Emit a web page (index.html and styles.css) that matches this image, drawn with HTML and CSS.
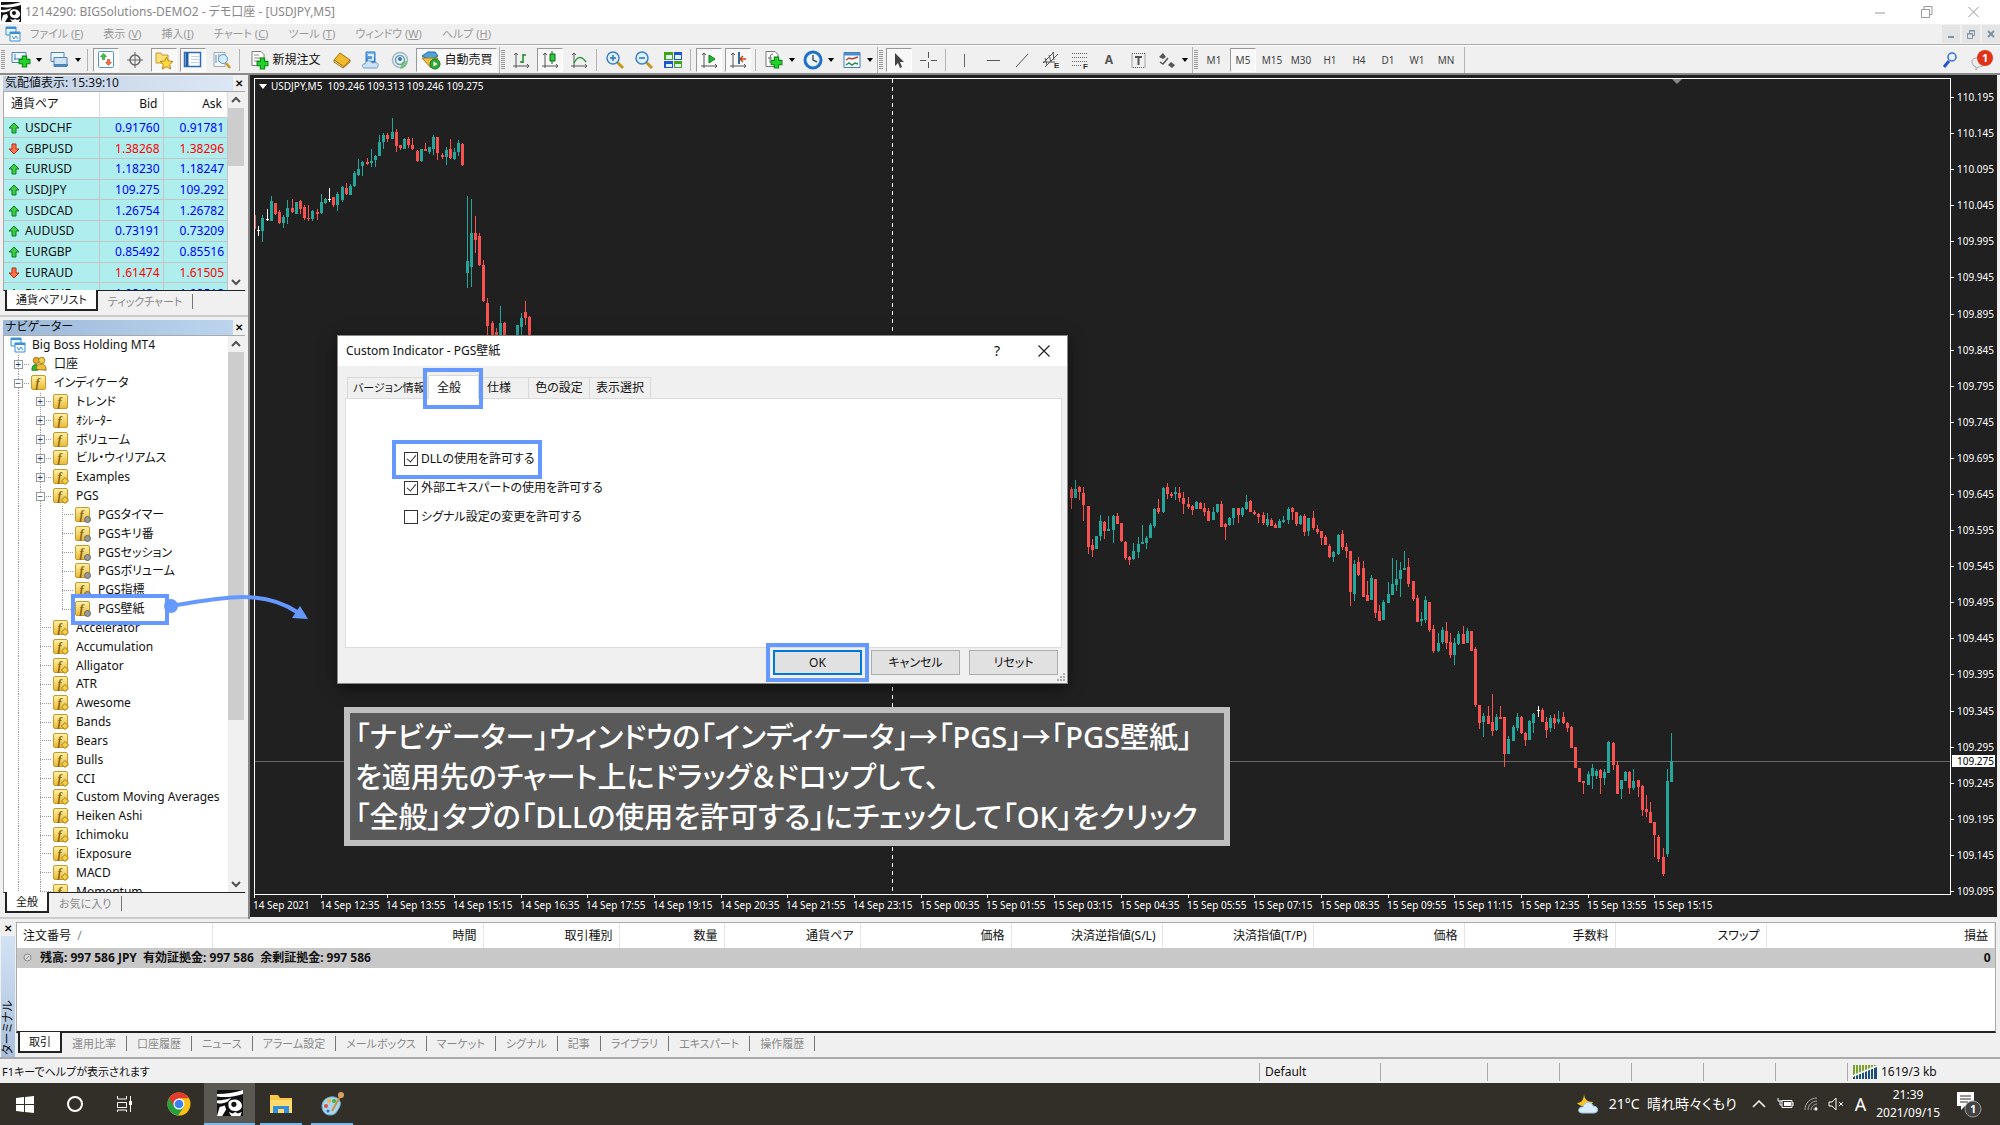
FILE: index.html
```
<!DOCTYPE html>
<html lang="ja">
<head>
  <meta charset="UTF-8">
  <meta name="viewport" content="width=device-width, initial-scale=1.0">
  <title>1214290: BIGSolutions-DEMO2 - デモ口座 - [USDJPY,M5]</title>
  <link rel="stylesheet" href="styles.css">
</head>
<body>
  <!-- shared icons -->
  <svg class="defs" width="0" height="0" aria-hidden="true">
    <defs>
      <linearGradient id="gold" x1="0" y1="0" x2="0" y2="1"><stop offset="0" stop-color="#fff3a8"/><stop offset="1" stop-color="#e8b935"/></linearGradient>
      <linearGradient id="blue" x1="0" y1="0" x2="0" y2="1"><stop offset="0" stop-color="#8cc4f5"/><stop offset="1" stop-color="#1f6fc4"/></linearGradient>
    </defs>
    <symbol id="i-windows" viewBox="0 0 16 16"><path d="M1 1h10v8H1z" fill="#e8f4fd" stroke="#3c8fd0"/><path d="M1 2h10" stroke="#3c8fd0" stroke-width="2"/><path d="M5 6h10v9H5z" fill="#f4faff" stroke="#3c8fd0"/><path d="M5 7h10" stroke="#3c8fd0" stroke-width="2"/><path d="M7 10l2 3 2-3 2 3" fill="none" stroke="#3c8fd0"/></symbol>
    <symbol id="i-func" viewBox="0 0 16 16"><rect x=".5" y=".5" width="14" height="14" rx="1.5" fill="url(#gold)" stroke="#c9982a"/><text x="4.500" y="11.500" font-family="Liberation Serif" font-style="italic" font-weight="bold" font-size="12" fill="#8a6410">f</text></symbol>
    <symbol id="i-func-y" viewBox="0 0 16 16"><use href="#i-func"/><path d="M12 8.500l3.500 3.500-3.500 3.500L8.500 12z" fill="#f2d04a" stroke="#a87e18"/></symbol>
    <symbol id="i-func-g" viewBox="0 0 16 16"><use href="#i-func"/><circle cx="12.500" cy="12.500" r="3" fill="#999" stroke="#666"/></symbol>
    <symbol id="i-people" viewBox="0 0 18 16"><circle cx="6" cy="4" r="3.500" fill="#e8a92c" stroke="#9a6d10"/><circle cx="12" cy="4" r="3.500" fill="#f4cf4d" stroke="#9a6d10"/><path d="M1 15c0-6 3-7 6-6l1 6z" fill="#35b52e" stroke="#1d7a1a"/><path d="M6 14c0-6 3-6 6-6s5 2 5 7z" fill="#eabf3b" stroke="#9a6d10"/></symbol>
    <symbol id="i-up" viewBox="0 0 12 12"><path d="M6 1l5 5H8v5H4V6H1z" fill="#3ecb4a" stroke="#0b7d1c"/></symbol>
    <symbol id="i-down" viewBox="0 0 12 12"><path d="M6 11L1 6h3V1h4v5h3z" fill="#ff7146" stroke="#b02c10"/></symbol>
    <symbol id="i-plus" viewBox="0 0 12 12"><path d="M4 1h4v3h3v4H8v3H4V8H1V4h3z" fill="#24d22c" stroke="#0a8a14"/></symbol>
    <symbol id="i-axes" viewBox="0 0 20 20"><path d="M5 3v15M2 16h16M3 5l2-2 2 2M16 14l2 2-2 2" fill="none" stroke="#555"/></symbol>
    <symbol id="i-logo" viewBox="0 0 20 20"><path d="M0 0h20v20H0z" fill="#111"/><path d="M0 3c7 0 14-1 20-3v3C14 5 7 6 0 5z" fill="#fff"/><path d="M0 8c5 0 8-1 11-2L8 9c-3 1-5 2-8 1z" fill="#fff"/><path d="M9 9c3-3 9-2 10 2s-3 6-6 5c-3 0-5-3-4-7z" fill="#fff"/><circle cx="13" cy="11" r="2" fill="#111"/><path d="M2 13l4-1 1 3-3 5H0zM9 17l2 3h7l1-3-3 1-2-1-2 1z" fill="#fff"/></symbol>
    <symbol id="i-scroll-up" viewBox="0 0 16 16"><path d="M4 10l4-4 4 4" fill="none" stroke="#505050" stroke-width="2"/></symbol>
    <symbol id="i-scroll-down" viewBox="0 0 16 16"><path d="M4 6l4 4 4-4" fill="none" stroke="#505050" stroke-width="2"/></symbol>
  </svg>

  <header class="titlebar">
    <svg class="logo" width="20" height="20"><use href="#i-logo"/></svg>
    <h1>1214290: BIGSolutions-DEMO2 - デモ口座 - [USDJPY,M5]</h1>
    <div class="win-buttons">
      <button aria-label="最小化"><svg width="14" height="14"><path d="M2 8h10" stroke="#999"/></svg></button>
      <button aria-label="元に戻す"><svg width="14" height="14"><path d="M1.500 4.500h8v8h-8zM4 4V1.500h8v8H10" fill="none" stroke="#999"/></svg></button>
      <button aria-label="閉じる"><svg width="14" height="14"><path d="M1.500 2l10 10M11.500 2l-10 10" stroke="#999"/></svg></button>
    </div>
  </header>

  <nav class="menubar">
    <svg width="16" height="16"><use href="#i-windows"/></svg>
    <a href="#">ファイル (<u>F</u>)</a>
    <a href="#">表示 (<u>V</u>)</a>
    <a href="#">挿入(<u>I</u>)</a>
    <a href="#">チャート (<u>C</u>)</a>
    <a href="#">ツール (<u>T</u>)</a>
    <a href="#">ウィンドウ (<u>W</u>)</a>
    <a href="#">ヘルプ (<u>H</u>)</a>
    <div class="mdi-buttons">
      <button aria-label="最小化"><svg width="10" height="10"><path d="M2 8h6" stroke="#7b93a8" stroke-width="2"/></svg></button>
      <button aria-label="元に戻す"><svg width="10" height="10"><path d="M1.500 4.500h5v5h-5zM3.500 4V1.500h5v5H7M3 2h6M1 5h6" fill="none" stroke="#7b93a8"/></svg></button>
      <button aria-label="閉じる"><svg width="10" height="10"><path d="M2 2l6 6M8 2L2 8" stroke="#7b93a8" stroke-width="2"/></svg></button>
    </div>
  </nav>

  <div class="toolbar">
    <div class="tool-group">
      <span class="grip"></span>
      <button class="tool drop" aria-label="新規チャート"><svg width="22" height="20"><path d="M2 2.500h14v10H2z" fill="#eef6ff" stroke="#4c86b8"/><path d="M5 4v6M4 9h8" stroke="#4c86b8"/><use href="#i-plus" x="8" y="5" width="13" height="13"/></svg></button>
      <button class="tool drop" aria-label="プロファイル"><svg width="22" height="20"><path d="M2 2.500h13v9H2z" fill="#eef6ff" stroke="#4c86b8"/><path d="M5 7.500h13v9H5z" fill="#cfe4f7" stroke="#4c86b8"/><path d="M5 15h14" stroke="#4c86b8" stroke-width="2"/></svg></button>
      <span class="sep"></span>
      <button class="tool on" aria-label="気配値表示"><svg width="20" height="20"><rect x="2.500" y="1.500" width="15" height="16" rx="1" fill="#fff" stroke="#4f95d0"/><use href="#i-up" x="4" y="3" width="7" height="7"/><use href="#i-down" x="9" y="9" width="7" height="7"/></svg></button>
      <button class="tool" aria-label="データウィンドウ"><svg width="20" height="20"><circle cx="10" cy="10" r="5" fill="none" stroke="#666" stroke-width="1.500"/><path d="M10 2v16M2 10h16" stroke="#666"/></svg></button>
      <button class="tool on" aria-label="ナビゲーター"><svg width="20" height="20"><path d="M2 3h5l1 2h6v8H2z" fill="#ffe17c" stroke="#c8992a"/><path d="M12.500 7l2 4 4.500.5-3.300 3 1 4.500-4.200-2.200L8.300 19l1-4.500L6 11.500l4.500-.5z" fill="#ffd93b" stroke="#b8861c"/></svg></button>
      <button class="tool on" aria-label="ターミナル"><svg width="20" height="20"><rect x="1.500" y="2.500" width="16" height="14" fill="#fff" stroke="#2c6cb0" stroke-width="1.500"/><path d="M4 3v13" stroke="#1d5ea8" stroke-width="3"/><path d="M8 6.500h8M8 9.500h8M8 12.500h8" stroke="#bcd0e6"/></svg></button>
      <button class="tool" aria-label="ストラテジーテスター"><svg width="20" height="20"><path d="M2 2.500h11v14H2z" fill="#f4f7fa" stroke="#a0aab4"/><path d="M4 5v8M7 4v8" stroke="#5d8cc0"/><circle cx="11" cy="9" r="4.500" fill="#d5ebfb" stroke="#5a9bd0"/><path d="M14 13l4 5" stroke="#c89a2a" stroke-width="2.500"/></svg></button>
      <span class="sep"></span>
      <button class="tool wide"><svg width="20" height="20"><path d="M2 1.500h9l3 3v11H2z" fill="#fff" stroke="#777"/><path d="M4 5h5M4 8h7M4 11h5" stroke="#888"/><use href="#i-plus" x="6" y="7" width="13" height="13"/></svg>新規注文</button>
      <button class="tool" aria-label="メタエディター"><svg width="20" height="20"><path d="M2 10l6-7 10 7-6 7z" fill="#f5b92d" stroke="#a0720f"/><path d="M2 10v2l9 6 7-6v-2l-6 7z" fill="#fff0c0" stroke="#a0720f"/></svg></button>
      <button class="tool" aria-label="仮想サーバー"><svg width="20" height="20"><path d="M5 2h9v11H5z" fill="url(#blue)" stroke="#2a78c4"/><path d="M7 5h5v5H7" fill="none" stroke="#fff" stroke-width="1.500"/><path d="M4 18c-4 0-3-5 0-4 1-4 6-4 7-1 4-1 7 0 6 3 0 2-2 2-3 2z" fill="#cfe3f6" stroke="#6d9cc8"/></svg></button>
      <button class="tool" aria-label="シグナル"><svg width="20" height="20"><circle cx="10" cy="10" r="7.500" fill="none" stroke="#9fb9c8" stroke-width="1.500"/><circle cx="10" cy="10" r="4.500" fill="none" stroke="#5f9cb8" stroke-width="1.500"/><circle cx="10" cy="9" r="2" fill="#2f78b8"/><path d="M10 19c4 0 7-3 7-8l-5 1z" fill="#5cb85c" opacity=".7"/></svg></button>
      <button class="tool wide on"><svg width="22" height="20"><path d="M2 6l6-4h7l3 4-8 4z" fill="#4ba6dc" stroke="#20689a"/><path d="M2 8h16l-7 10z" fill="#f0c24a" stroke="#a87a14"/><circle cx="15" cy="14" r="5" fill="#2fae35" stroke="#15771c"/><path d="M13.500 11.500l4 2.500-4 2.500z" fill="#fff"/></svg>自動売買</button>
    </div>
    <div class="tool-group">
      <span class="grip"></span>
      <button class="tool" aria-label="バーチャート"><svg width="20" height="20"><use href="#i-axes"/><path d="M12 4v9M12 5h3M9 12h3" stroke="#1a8a2a" stroke-width="1.500"/></svg></button>
      <button class="tool on" aria-label="ローソク足"><svg width="20" height="20"><use href="#i-axes"/><path d="M12 1v13" stroke="#0c6b18"/><path d="M10 4h5v7h-5z" fill="#30c940" stroke="#0c6b18"/></svg></button>
      <button class="tool" aria-label="ラインチャート"><svg width="20" height="20"><use href="#i-axes"/><path d="M5 13c3-6 7-8 12-1" fill="none" stroke="#2a9a3a" stroke-width="1.500"/></svg></button>
      <span class="sep"></span>
      <button class="tool" aria-label="拡大"><svg width="20" height="20"><path d="M12 12l6 6" stroke="#c9961e" stroke-width="3"/><circle cx="8" cy="8" r="6" fill="#dff0fd" stroke="#3c80c8" stroke-width="1.500"/><path d="M5 8h6M8 5v6" stroke="#2f6fb8" stroke-width="1.500"/></svg></button>
      <button class="tool" aria-label="縮小"><svg width="20" height="20"><path d="M12 12l6 6" stroke="#c9961e" stroke-width="3"/><circle cx="8" cy="8" r="6" fill="#dff0fd" stroke="#3c80c8" stroke-width="1.500"/><path d="M5 8h6" stroke="#2f6fb8" stroke-width="1.500"/></svg></button>
      <button class="tool" aria-label="タイル表示"><svg width="20" height="20"><path d="M1 2h9v8H1zM11 11h8v7h-8z" fill="#3fa518"/><path d="M11 2h8v8h-8zM1 11h9v7H1z" fill="#1d54cf"/><path d="M3 5h6v4H3zM12 5h6v4h-6zM3 14h6v3H3zM12 14h6v3h-6z" fill="#e6f0ff"/></svg></button>
      <span class="sep"></span>
      <button class="tool on" aria-label="自動スクロール"><svg width="20" height="20"><use href="#i-axes"/><path d="M10 5l6 4-6 4z" fill="#22b832" stroke="#0f7d1c"/></svg></button>
      <button class="tool on" aria-label="チャートシフト"><svg width="20" height="20"><use href="#i-axes"/><path d="M11 2v12" stroke="#2c6da8" stroke-width="2"/><path d="M18 9h-5M15 6l-3 3 3 3" fill="none" stroke="#c8401c" stroke-width="1.500"/></svg></button>
      <span class="sep"></span>
      <button class="tool drop" aria-label="インディケータ"><svg width="22" height="20"><path d="M3 1.500h9l3 3v12H3z" fill="#fff" stroke="#777"/><path d="M10 4c-3 0-3 2-3 9M5 8h4" fill="none" stroke="#666"/><use href="#i-plus" x="7" y="6" width="13" height="13"/></svg></button>
      <button class="tool drop" aria-label="期間"><svg width="22" height="20"><circle cx="11" cy="10" r="8" fill="#e9f4fd" stroke="#1f72c8" stroke-width="3"/><path d="M11 5v5l4 2" fill="none" stroke="#555" stroke-width="1.500"/></svg></button>
      <button class="tool drop" aria-label="定型チャート"><svg width="22" height="20"><path d="M3 2.500h16v15H3z" fill="#f7fbff" stroke="#3d7db8"/><path d="M3 4h16" stroke="#4d8fca" stroke-width="3"/><path d="M5 10l3-2 3 1 6-2" fill="none" stroke="#c04020" stroke-width="1.500"/><path d="M5 15l3-2 3 2 3-2 3 1" fill="none" stroke="#2a8a50" stroke-width="1.500"/></svg></button>
    </div>
    <div class="tool-group">
      <span class="grip"></span>
      <button class="tool on" aria-label="カーソル"><svg width="20" height="20"><path d="M6 3v13l3-3 2 5 2-1-2-5h4z" fill="#444"/></svg></button>
      <button class="tool" aria-label="クロスヘア"><svg width="20" height="20"><path d="M10.500 2v6M10.500 12v6M2 10.500h6M13 10.500h6" stroke="#555"/></svg></button>
      <span class="sep"></span>
      <button class="tool" aria-label="垂直線"><svg width="20" height="20"><path d="M10.500 4v13" stroke="#666"/></svg></button>
      <button class="tool" aria-label="水平線"><svg width="20" height="20"><path d="M4 10.500h13" stroke="#555"/></svg></button>
      <button class="tool" aria-label="トレンドライン"><svg width="20" height="20"><path d="M4 17L16 4" stroke="#555"/></svg></button>
      <button class="tool" aria-label="チャネル"><svg width="20" height="20"><path d="M2 13L13 2M4 17L17 4M4 8l2 7M8 5l2 7M12 2l1 8M2 12h12" stroke="#555"/><text x="13" y="18" class="tool-letter">E</text></svg></button>
      <button class="tool" aria-label="フィボナッチ"><svg width="20" height="20"><path d="M2 3.500h16M2 7.500h16M2 11.500h16M2 15.500h9" stroke="#666" stroke-dasharray="1 1"/><text x="13" y="19" class="tool-letter">F</text></svg></button>
      <button class="tool letter">A</button>
      <button class="tool" aria-label="ラベル"><svg width="20" height="20"><path d="M4 3.500h13v14H4z" fill="none" stroke="#555" stroke-dasharray="1 1"/><path d="M7 7h7M10.500 7v8" stroke="#555" stroke-width="2"/></svg></button>
      <button class="tool drop" aria-label="矢印"><svg width="22" height="20"><path d="M3 7l4-4 3 4-3 2zM12 15l3-3 4 3-3 3z" fill="#555"/><path d="M4 12l3 2 5-6" fill="none" stroke="#555" stroke-width="1.500"/></svg></button>
    </div>
    <div class="tool-group periods">
      <span class="grip"></span>
      <button class="tool">M1</button>
      <button class="tool on">M5</button>
      <button class="tool">M15</button>
      <button class="tool">M30</button>
      <button class="tool">H1</button>
      <button class="tool">H4</button>
      <button class="tool">D1</button>
      <button class="tool">W1</button>
      <button class="tool">MN</button>
    </div>
    <div class="tool-end">
      <button class="tool" aria-label="検索"><svg width="20" height="20"><path d="M9 11l-5 6" stroke="#2355c8" stroke-width="3"/><circle cx="12" cy="7" r="4" fill="#eaf3ff" stroke="#2f6fd8" stroke-width="1.500"/></svg></button>
      <button class="tool" aria-label="通知"><svg width="26" height="24"><path d="M3 13c0-4 12-5 13 0s-4 6-7 6l-2 3v-3c-3-1-4-3-4-6z" fill="#ececec" stroke="#aaa"/><circle cx="16" cy="10" r="8" fill="#e03218"/><text x="13" y="14" class="badge-num">1</text></svg></button>
    </div>
  </div>

  <main class="workspace">
    <aside class="side">
      <section class="panel market">
        <div class="panel-title"><h2>気配値表示: 15:39:10</h2><button aria-label="閉じる">✕</button></div>
        <div class="panel-body">
          <div class="market-list">
            <table>
              <thead><tr><th>通貨ペア</th><th>Bid</th><th>Ask</th></tr></thead>
              <tbody>
                <tr><td><svg width="12" height="12"><use href="#i-up"/></svg>USDCHF</td><td>0.91760</td><td>0.91781</td></tr>
                <tr class="fall"><td><svg width="12" height="12"><use href="#i-down"/></svg>GBPUSD</td><td>1.38268</td><td>1.38296</td></tr>
                <tr><td><svg width="12" height="12"><use href="#i-up"/></svg>EURUSD</td><td>1.18230</td><td>1.18247</td></tr>
                <tr><td><svg width="12" height="12"><use href="#i-up"/></svg>USDJPY</td><td>109.275</td><td>109.292</td></tr>
                <tr><td><svg width="12" height="12"><use href="#i-up"/></svg>USDCAD</td><td>1.26754</td><td>1.26782</td></tr>
                <tr><td><svg width="12" height="12"><use href="#i-up"/></svg>AUDUSD</td><td>0.73191</td><td>0.73209</td></tr>
                <tr><td><svg width="12" height="12"><use href="#i-up"/></svg>EURGBP</td><td>0.85492</td><td>0.85516</td></tr>
                <tr class="fall"><td><svg width="12" height="12"><use href="#i-down"/></svg>EURAUD</td><td>1.61474</td><td>1.61505</td></tr>
                <tr><td><svg width="12" height="12"><use href="#i-up"/></svg>EURCHF</td><td>1.08481</td><td>1.08512</td></tr>
              </tbody>
            </table>
          </div>
          <div class="scroll"><svg width="16" height="16"><use href="#i-scroll-up"/></svg><span class="thumb short"></span><svg width="16" height="16"><use href="#i-scroll-down"/></svg></div>
        </div>
        <div class="panel-tabs"><button class="current">通貨ペアリスト</button><button>ティックチャート</button></div>
      </section>

      <section class="panel navigator">
        <div class="panel-title focused"><h2>ナビゲーター</h2><button aria-label="閉じる">✕</button></div>
        <div class="panel-body">
          <div class="tree-box"><ul class="tree" id="tree"></ul></div>
          <div class="scroll"><svg width="16" height="16"><use href="#i-scroll-up"/></svg><span class="thumb long"></span><svg width="16" height="16"><use href="#i-scroll-down"/></svg></div>
        </div>
        <div class="panel-tabs"><button class="current">全般</button><button>お気に入り</button></div>
      </section>
    </aside>

    <section class="chart">
      <div class="plot">
        <svg id="candles" width="100%" height="100%"></svg>
        <p class="quote"><span class="tri"></span>USDJPY,M5&nbsp; 109.246 109.313 109.246 109.275</p>
      </div>
      <svg id="prices" class="prices"></svg>
      <svg id="times" class="times"></svg>
    </section>

    <svg class="drag-arrow" width="150" height="50"><circle cx="8" cy="23" r="7" fill="#6699ff"/><path d="M8 23C60 14 100 6 134 29" fill="none" stroke="#6699ff" stroke-width="4"/><path d="M145 36l-16-1 8-12z" fill="#6699ff"/></svg>

    <div class="dialog" role="dialog" aria-label="Custom Indicator">
      <div class="dialog-title">
        <h2>Custom Indicator - PGS壁紙</h2>
        <button aria-label="ヘルプ">?</button>
        <button aria-label="閉じる"><svg width="14" height="14"><path d="M1.500 1.500l11 11M12.500 1.500l-11 11" stroke="#222" stroke-width="1.200"/></svg></button>
      </div>
      <div class="dialog-tabs">
        <button class="w-long">バージョン情報</button><button class="w-short current mark">全般</button><button class="w-short">仕様</button><button>色の設定</button><button>表示選択</button>
      </div>
      <div class="dialog-page">
        <label class="mark"><input type="checkbox" checked>DLLの使用を許可する</label>
        <label><input type="checkbox" checked>外部エキスパートの使用を許可する</label>
        <label><input type="checkbox">シグナル設定の変更を許可する</label>
      </div>
      <div class="dialog-buttons">
        <button class="default mark">OK</button>
        <button>キャンセル</button>
        <button>リセット</button>
      </div>
      <svg class="size-grip" width="9" height="9"><path d="M6 1h2M3 4h2M6 4h2M0 7h2M3 7h2M6 7h2" stroke="#aaa" stroke-width="2"/></svg>
    </div>

    <p class="callout">「ナビゲーター」ウィンドウの「インディケータ」→「PGS」→「PGS壁紙」<br>を適用先のチャート上にドラッグ＆ドロップして、<br>「全般」タブの「DLLの使用を許可する」にチェックして「OK」をクリック</p>
  </main>

  <section class="terminal">
    <div class="terminal-side"><button aria-label="閉じる">✕</button><h2>ターミナル</h2></div>
    <div class="terminal-main">
      <div class="orders">
        <table>
          <colgroup><col class="c-order"><col class="c-time"><col class="c-mid"><col class="c-lot"><col class="c-mid"><col><col><col><col><col><col><col class="c-profit"></colgroup>
          <thead><tr><th>注文番号 &nbsp;<span class="sort">/</span></th><th>時間</th><th>取引種別</th><th>数量</th><th>通貨ペア</th><th>価格</th><th>決済逆指値(S/L)</th><th>決済指値(T/P)</th><th>価格</th><th>手数料</th><th>スワップ</th><th>損益</th></tr></thead>
          <tbody><tr><td colspan="11"><svg width="9" height="9"><circle cx="4.500" cy="4.500" r="3.500" fill="#ddd" stroke="#888"/><path d="M3 6l3-3" stroke="#888"/></svg>残高: 997 586 JPY&nbsp; 有効証拠金: 997 586&nbsp; 余剰証拠金: 997 586</td><td>0</td></tr></tbody>
        </table>
      </div>
      <div class="panel-tabs terminal-tabs">
        <button class="current">取引</button><button>運用比率</button><button>口座履歴</button><button>ニュース</button><button>アラーム設定</button><button>メールボックス</button><button>マーケット</button><button>シグナル</button><button>記事</button><button>ライブラリ</button><button>エキスパート</button><button>操作履歴</button>
      </div>
    </div>
  </section>

  <footer class="status">
    <span class="help">F1キーでヘルプが表示されます</span>
    <span class="s-profile">Default</span><span class="s-date"></span><span></span><span></span><span></span><span></span><span></span>
    <span class="s-net"><svg width="24" height="14"><path d="M0 0h24L0 10z" fill="#7ba22c"/><path d="M24 2v12H0v-2z" fill="#1b4f7a"/><path d="M2.500 0v14M5.500 0v14M8.500 0v14M11.500 0v14M14.500 0v14M17.500 0v14M20.500 0v14" stroke="#f0f0f0"/></svg>1619/3 kb</span>
  </footer>

  <div class="taskbar">
    <button aria-label="スタート"><svg width="18" height="18"><path d="M0 3l8-1v7H0zM9 2l9-1v8H9zM0 10h8v7l-8-1zM9 10h9v8l-9-1z" fill="#fff"/></svg></button>
    <button aria-label="検索"><svg width="18" height="18"><circle cx="9" cy="9" r="7" fill="none" stroke="#fff" stroke-width="2"/></svg></button>
    <button aria-label="タスクビュー"><svg width="18" height="18"><path d="M1.500 1v3h9V1M1.500 7.500h9v5h-9zM1.500 17v-2h9v2M14.500 1v16" fill="none" stroke="#fff"/><path d="M13 6h3v4h-3z" fill="#fff"/></svg></button>
    <button class="app first" aria-label="Chrome"><svg width="24" height="24" viewBox="0 0 24 24"><circle cx="12" cy="12" r="11.500" fill="#fbc116"/><path d="M12 12L2 6.300A11.500 11.500 0 0 0 11 23.500L17 15z" fill="#269f42"/><path d="M2 6.300A11.500 11.500 0 0 1 22 6.300H12L7 14z" fill="#e33b2e"/><circle cx="12" cy="12" r="5.500" fill="#fff"/><circle cx="12" cy="12" r="4.300" fill="#3b7ff0"/></svg></button>
    <button class="app active" aria-label="MetaTrader"><svg width="26" height="26"><use href="#i-logo"/></svg></button>
    <button class="app open" aria-label="エクスプローラー"><svg width="24" height="22"><path d="M1 2h8l2 3h12v15H1z" fill="#f9c646"/><path d="M1 7h22v13H1z" fill="#ffdb6e"/><path d="M4 20v-7h16v7h-5v-4H9v4z" fill="#2f8fdc"/></svg></button>
    <button class="app open" aria-label="ペイント"><svg width="24" height="24"><path d="M2 14c0-6 6-10 12-9s8 6 5 11-4 7-9 7-8-4-8-9z" fill="#a9d6ef" stroke="#6fa8c8"/><circle cx="6" cy="14" r="2" fill="#e2483d"/><circle cx="9" cy="9" r="2" fill="#f2b632"/><circle cx="14" cy="9" r="2" fill="#3fae49"/><circle cx="8" cy="19" r="1.500" fill="#3366cc"/><path d="M21 3L12 19" stroke="#c98a3c" stroke-width="2"/><circle cx="21" cy="3" r="3" fill="#d9a066"/></svg></button>
    <div class="tray">
      <svg width="24" height="24"><path d="M9 1c0 6 3 9 9 9-2 5-12 6-16 1 5 0 7-4 7-10z" fill="#f8c41c"/><path d="M7 21c-5 0-4-7 1-6 1-6 9-6 10-1 6 0 6 7 1 7z" fill="#d9ecfa" stroke="#9cc6e8"/></svg>
      <span class="weather">21°C&nbsp; 晴れ時々くもり</span>
      <svg width="14" height="10"><path d="M1 8l6-6 6 6" fill="none" stroke="#fff" stroke-width="1.500"/></svg>
      <svg width="18" height="14"><path d="M6 3.500h10v7H6zM17 5v4M2 1v3h4M4 4v4h2" fill="none" stroke="#fff"/><path d="M8 5h7v4H8z" fill="#fff"/></svg>
      <svg width="14" height="14"><path d="M1 13C1 6 6 1 13 1M4 13c0-5 4-9 9-9M7 13c0-3 3-6 6-6M10 13c0-2 1-3 3-3" fill="none" stroke="#aaa"/><circle cx="12" cy="12" r="1.500" fill="#fff"/></svg>
      <svg width="17" height="14"><path d="M1 5h3l4-4v12L4 9H1zM11 5l4 4M15 5l-4 4" fill="none" stroke="#fff"/></svg>
      <span class="ime">A</span>
      <time class="clock">21:39<br>2021/09/15</time>
      <svg width="26" height="28"><path d="M1 2h17v14H9l-4 4v-4H1z" fill="#fff"/><path d="M4 6h11M4 9h11M4 12h8" stroke="#322e28"/><circle cx="17" cy="19" r="8" fill="#444" stroke="#999"/><text x="14" y="23" class="badge-num">1</text></svg>
    </div>
  </div>

  <script src="script.js"></script>
</body>
</html>
```
FILE: styles.css
```
*, *::before, *::after { box-sizing: border-box; }
body { margin: 0; height: 100vh; display: flex; flex-direction: column; overflow: hidden; background: #f0f0f0; color: #111; font-family: "Noto Sans", "Noto Sans CJK JP", sans-serif; font-size: 12px; line-height: 16px; font-feature-settings: "palt"; }
h1, h2, p, ul { margin: 0; padding: 0; font-size: inherit; font-weight: normal; }
button { margin: 0; padding: 0; border: 0; background: none; color: inherit; font: inherit; font-feature-settings: inherit; }
svg { display: block; flex: none; }
.defs { position: absolute; }

/* title + menu */
.titlebar { flex: none; height: 24px; display: flex; align-items: center; gap: 4px; background: #fff; color: #888; padding-left: 1px; }
.titlebar h1 { flex: 1; }
.win-buttons { display: flex; gap: 33px; padding-right: 19px; }
.menubar { flex: none; height: 21px; display: flex; align-items: center; gap: 20px; padding-left: 5px; border-bottom: 1px solid #aaa; font-size: 11px; }
.menubar a { color: #999; text-decoration: none; }
.menubar svg { margin-right: -11px; }
.mdi-buttons { display: flex; gap: 2px; margin-left: auto; }
.mdi-buttons button { width: 18px; height: 18px; background: #e4e4e4; }
.mdi-buttons svg { margin: 0 auto; }

/* toolbar */
.toolbar { flex: none; height: 30px; display: flex; align-items: center; border-top: 1px solid #fff; border-bottom: 2px solid #8a8a8a; }
.tool-group { height: 26px; display: flex; align-items: center; gap: 3px; padding: 0 2px 0 1px; border-right: 1px solid #b4b4b4; }
.grip { width: 4px; height: 20px; background: repeating-linear-gradient(#999 0 1px, #f0f0f0 1px 2px); }
.sep { width: 4px; height: 22px; background: linear-gradient(#b4b4b4, #b4b4b4) 1px 0 / 1px 100% no-repeat; }
.tool { width: 26px; height: 24px; display: flex; align-items: center; justify-content: center; }
.tool.on { background: #f8f8f8; border: 1px solid #fff; border-top-color: #999; border-left-color: #999; }
.tool.drop { width: 36px; gap: 4px; }
.tool.drop::after { content: ""; border: 3px solid transparent; border-top: 4px solid #000; border-bottom: 0; }
.tool.wide { width: 81px; gap: 2px; }
.tool.letter { color: #555; font-weight: bold; }
.tool-letter { font: bold 8px "Liberation Sans"; fill: #333; }
.periods { padding-right: 5px; }
.periods .tool { color: #444; font-size: 10px; }
.tool-end { display: flex; gap: 6px; margin-left: auto; padding-right: 5px; }
.badge-num { font: bold 11px "Noto Sans"; fill: #fff; }

/* side panels */
.workspace { flex: 1; min-height: 0; display: flex; position: relative; }
.side { flex: none; width: 250px; display: flex; flex-direction: column; border-right: 2px solid #888; }
.panel { display: flex; flex-direction: column; padding: 0 3px 3px; border-bottom: 2px solid #ccc; }
.market { flex: none; height: 242px; }
.navigator { flex: 1; min-height: 0; padding-top: 2px; }
.panel-title { flex: none; height: 16px; display: flex; align-items: center; }
.panel-title h2 { flex: 1; padding-left: 2px; height: 15px; line-height: 14px; background: linear-gradient(90deg, #bfd0e4, #dce7f5); }
.panel-title.focused h2 { background: linear-gradient(90deg, #9bb8d8, #bcd4ee); }
.panel-title button { width: 12px; font-size: 10px; font-weight: bold; }
.panel-body { flex: 1; min-height: 0; display: flex; background: #fff; border: 1px solid #aaa; border-width: 1px 0 0 1px; border-bottom: 1px solid #222; }
.scroll { flex: none; width: 17px; display: flex; flex-direction: column; background: #f0f0f0; }
.thumb { background: #cdcdcd; margin-bottom: auto; width: 16px; }
.thumb.short { height: 58px; }
.thumb.long { height: 368px; }
.panel-tabs { flex: none; height: 21px; display: flex; align-items: flex-start; font-size: 11px; }
.panel-tabs button { height: 15px; line-height: 15px; margin-top: 3px; padding: 0 10px; color: #888; border-right: 1px solid #777; }
.panel-tabs button.current { height: 21px; line-height: 20px; margin: -1px 0 0 2px; padding: 0 9px; color: #111; background: #fff; border: solid #222; border-width: 0 2px 2px; }

.market-list { flex: 1; overflow: hidden; }
.market-list table { width: 100%; height: 212px; border-collapse: collapse; table-layout: fixed; }
.market-list th { height: 25px; padding: 0 5px; font-weight: normal; text-align: right; border-right: 1px solid #ddd; }
.market-list th:first-child { width: 95px; text-align: left; padding-left: 7px; }
.market-list th:nth-child(2) { width: 64px; }
.market-list td { padding: 0 3px; background: #afeeee; border: 1px solid #c4c4c4; border-left: 0; text-align: right; color: #00f; line-height: 15px; }
.market-list td:first-child { text-align: left; color: #111; padding-left: 4px; }
.market-list td svg { display: inline-block; vertical-align: -2px; margin-right: 5px; }
.market-list .fall td { color: #f00; }
.market-list .fall td:first-child { color: #111; }

/* navigator tree */
.tree-box { flex: 1; overflow: hidden; }
.tree { height: calc(100% + 9px); display: grid; grid-auto-rows: 1fr; padding-left: 3px; list-style: none; }
.tree li { display: flex; align-items: center; min-height: 0; white-space: nowrap; }
.tree li svg { margin: 0 7px 0 2px; }
.tree li.root svg { margin-left: 3px; margin-right: 6px; }
.tree .cell { position: relative; width: 22px; height: 100%; display: flex; align-items: center; justify-content: center; background: repeating-linear-gradient(#999 0 1px, transparent 1px 2px) 11px 0 / 1px 100% no-repeat; }
.tree .cell.last { background-size: 1px 50%; }
.tree .cell.tee::after { content: ""; width: 11px; height: 1px; margin-left: 11px; background: repeating-linear-gradient(90deg, #999 0 1px, transparent 1px 2px); }
.tree .cell button { position: absolute; width: 9px; height: 9px; border: 1px solid #999; background: #fff; font-size: 10px; line-height: 7px; color: #1a3a90; }
.mark { position: relative; }
.mark::after { content: ""; position: absolute; inset: -8px -7px; border: 4px solid #6699ff; pointer-events: none; }
.tree li.mark::after { inset: -6px auto -6px 64px; width: 98px; }
.drag-arrow { position: absolute; left: 163px; top: 508px; z-index: 2; }

/* chart */
.chart { flex: 1; min-width: 0; display: grid; grid-template: 1fr 22px / 1fr 46px; padding: 3px 0 0 4px; margin: 0 3px 2px 0; background: #202020; }
.plot { position: relative; min-width: 0; min-height: 0; border: 1px solid #fff; overflow: hidden; }
.quote { position: absolute; left: 4px; top: 0; display: flex; align-items: center; color: #fff; font-size: 10px; line-height: 14px; }
.tri { border: 4px solid transparent; border-top: 5px solid #fff; border-bottom: 0; margin-right: 4px; }
.prices { width: 46px; height: 100%; overflow: visible; }
.times { width: 100%; height: 22px; overflow: visible; }
.prices text, .times text { fill: #fff; font-size: 10px; }
.prices .now { fill: #000; }

/* indicator dialog */
.dialog { position: absolute; left: 337px; top: 260px; width: 731px; height: 349px; display: flex; flex-direction: column; background: #f0f0f0; border: 1px solid #888; box-shadow: 0 4px 14px rgba(0,0,0,0.5); }
.dialog-title { flex: none; height: 30px; display: flex; align-items: center; background: #fff; padding: 0 16px 0 8px; }
.dialog-title h2 { flex: 1; }
.dialog-title button { width: 14px; font-size: 14px; margin-left: 33px; }
.dialog-tabs { flex: none; height: 32px; display: flex; align-items: flex-end; padding-left: 9px; }
.dialog-tabs button { width: 61px; height: 21px; line-height: 20px; border: 1px solid #d9d9d9; border-bottom: 0; border-left: 0; white-space: nowrap; }
.dialog-tabs .w-long { width: 82px; text-align: left; padding-left: 5px; border-left: 1px solid #d9d9d9; font-size: 11px; }
.dialog-tabs .w-short { width: 50px; text-align: left; padding-left: 8px; }
.dialog-tabs .current { height: 24px; background: #fff; z-index: 1; margin-bottom: -1px; }
.dialog-tabs .mark::after { inset: -8px -5px -10px -6px; }
.dialog-page { flex: 1; display: flex; flex-direction: column; align-items: flex-start; gap: 13px; margin: 0 5px 0 7px; padding: 52px 0 0 58px; background: #fff; border: 1px solid #dcdcdc; }
.dialog-page label { display: flex; align-items: center; }
.dialog-page .mark::after { inset: -11px -7px -12px -12px; }
.dialog-page input { appearance: none; width: 14px; height: 14px; margin: 0 3px 0 0; border: 1px solid #333; background: #fff; }
.dialog-page input:checked::after { content: ""; display: block; width: 5px; height: 9px; margin: 0 0 0 4px; border: solid #333; border-width: 0 1px 1px 0; transform: rotate(40deg); }
.dialog-buttons { flex: none; display: flex; justify-content: flex-end; gap: 9px; padding: 2px 9px 8px; }
.dialog-buttons button { width: 89px; height: 25px; background: #e1e1e1; border: 1px solid #adadad; }
.dialog-buttons .default { border: 2px solid #0078d7; }
.dialog-buttons .mark::after { inset: -9px; }
.size-grip { position: absolute; right: 1px; bottom: 1px; }
.callout { position: absolute; left: 344px; top: 632px; width: 886px; padding: 4px 5px 3px; border: 6px solid #bfbfbf; background: #595959; color: #fff; font-size: 29px; line-height: 40px; font-weight: 500; white-space: nowrap; }

/* terminal */
.terminal { flex: none; height: 140px; display: flex; border-bottom: 2px solid #aaa; }
.terminal-side { flex: none; width: 16px; display: flex; flex-direction: column; align-items: center; }
.terminal-side button { height: 17px; font-size: 10px; font-weight: bold; }
.terminal-side h2 { flex: 1; width: 14px; writing-mode: vertical-rl; text-orientation: sideways; transform: rotate(180deg); line-height: 14px; padding-top: 2px; background: linear-gradient(#a9c0dc, #d3e3f5); }
.terminal-main { flex: 1; min-width: 0; display: flex; flex-direction: column; padding: 3px 4px 0 0; }
.orders { flex: 1; background: #fff; border: 1px solid #aaa; border-bottom: 2px solid #222; }
.orders table { width: 100%; border-collapse: collapse; table-layout: fixed; }
.orders col { width: 151px; }
.orders .c-order { width: 195px; }
.orders .c-time { width: 271px; }
.orders .c-mid { width: 136px; }
.orders .c-lot { width: 105px; }
.orders .c-profit { width: auto; }
.orders th { height: 25px; padding: 0 6px; font-weight: normal; text-align: right; border-right: 1px solid #e5e5e5; }
.orders th:first-child { text-align: left; }
.sort { color: #888; }
.orders td { height: 20px; padding: 0 6px; background: #c8c8c8; font-weight: bold; }
.orders td:last-child { text-align: right; padding-right: 4px; }
.orders td svg { display: inline-block; margin-right: 8px; }
.terminal-tabs { height: 24px; }

/* status bar + taskbar */
.status { flex: none; height: 24px; display: flex; align-items: center; padding-top: 2px; }
.status span { width: 72px; height: 18px; line-height: 18px; padding-left: 5px; border-left: 1px solid #aaa; }
.status .help { flex: 1; padding-left: 2px; border: 0; font-size: 11px; }
.status .s-profile { width: 121px; }
.status .s-date { width: 107px; }
.status .s-net { width: 153px; display: flex; align-items: center; gap: 4px; }
.taskbar { flex: none; height: 42px; display: flex; align-items: center; background: #322e28; color: #fff; }
.taskbar button { width: 50px; height: 42px; display: flex; align-items: center; justify-content: center; }
.taskbar .app { width: 51px; }
.taskbar .first { margin-left: 3px; }
.taskbar .active { background: #5b5853; border-bottom: 2px solid #76b9ed; }
.taskbar .open { background: linear-gradient(#76b9ed, #76b9ed) center bottom / 42px 2px no-repeat; }
.tray { display: flex; align-items: center; gap: 10px; margin-left: auto; padding-right: 18px; }
.weather { font-size: 14px; padding-right: 5px; }
.ime { font-size: 18px; }
.clock { text-align: center; line-height: 18px; padding-right: 6px; }
```
FILE: script.js
```
// navigator rows: depth, icon, label, expander
const rows = [
  [0, 'windows', 'Big Boss Holding MT4'],
  [1, 'people', '口座', '+'],
  [1, 'func', 'インディケータ', '−'],
  [2, 'func', 'トレンド', '+'],
  [2, 'func', 'ｵｼﾚｰﾀｰ', '+'],
  [2, 'func', 'ボリューム', '+'],
  [2, 'func', 'ビル・ウィリアムス', '+'],
  [2, 'func-y', 'Examples', '+'],
  [2, 'func-y', 'PGS', '−'],
  [3, 'func-g', 'PGSタイマー'],
  [3, 'func-g', 'PGSキリ番'],
  [3, 'func-g', 'PGSセッション'],
  [3, 'func-g', 'PGSボリューム'],
  [3, 'func-g', 'PGS指標'],
  [3, 'func-g', 'PGS壁紙']
];
['Accelerator', 'Accumulation', 'Alligator', 'ATR', 'Awesome', 'Bands', 'Bears', 'Bulls', 'CCI',
  'Custom Moving Averages', 'Heiken Ashi', 'Ichimoku', 'iExposure', 'MACD', 'Momentum']
  .forEach(name => rows.push([2, 'func-y', name]));

document.getElementById('tree').innerHTML = rows.map(([depth, icon, label, box]) => {
  const picked = label === 'PGS壁紙';
  let cells = '';
  for (let d = 1; d <= depth; d++) {
    const tee = d === depth;
    cells += `<span class="cell${tee ? ' tee' : ''}${tee && picked ? ' last' : ''}">${tee && box ? `<button>${box}</button>` : ''}</span>`;
  }
  return `<li class="${depth ? '' : 'root'}${picked ? 'mark' : ''}">${cells}<svg width="16" height="16"><use href="#i-${icon}"/></svg>${label}</li>`;
}).join('');

// bars: high, body top, body bottom, low (px), r = down, g = up, w = doji
const series = [
  { start: 0, bars: `132 135 149 153 r,146 150 151 156 w,135 138 151 162 g,129 139 140 141 w,116 121 141 141 g,123 123 134 135 r,130 132 143 144 r,135 137 143 148 g,120 128 137 144 g,119 128 132 133 r,122 122 134 134 g,120 121 129 134 r,125 127 138 140 r,125 138 139 141 r,130 131 139 141 g,129 132 134 140 r,114 122 133 134 g,118 119 123 124 g,108 119 120 122 w,117 117 125 127 r,112 114 125 131 g,106 107 120 122 g,103 108 114 115 r,104 106 115 115 g,91 93 106 107 g,79 89 95 96 g,81 82 86 96 g,78 82 84 85 r,69 81 83 87 g,75 76 80 87 g,55 62 76 76 g,53 55 62 69 g,53 55 59 62 r,38 52 59 59 g,49 52 66 72 r,65 65 68 70 r,58 59 69 69 g,57 59 65 68 r,58 65 69 70 r,70 71 81 82 r,69 69 81 82 g,63 69 71 71 r,67 67 72 74 g,55 57 69 75 g,57 57 73 80 r,73 75 77 79 r,67 70 77 85 g,59 69 78 79 r,68 72 79 80 g,60 63 72 76 g,63 64 85 86 r,116 181 193 208 g,119 153 187 207 g,136 153 160 173 r,153 156 185 186 r,180 185 221 222 r,218 223 246 257 r,241 243 260 260 r,248 252 257 260 r,226 243 262 262 g,242 243 262 262 r` },
  { start: 63, bars: `245 245 262 262 g,233 238 247 255 g,221 232 238 245 r,236 237 262 262 r` },
  { start: 196, bars: `407 409 418 429 r,400 409 418 418 g,406 407 412 420 r,407 413 425 441 r,426 426 467 474 r,459 465 470 477 r,456 456 469 469 g,435 441 456 461 g,441 442 451 459 r,436 449 451 451 g,435 436 450 463 g,433 436 444 444 r,443 443 461 462 r,461 462 478 480 r,476 477 480 485 r,463 471 479 480 g,457 464 472 478 g,445 462 464 464 g,456 458 463 469 g,443 445 458 458 g,428 429 446 448 g,419 428 432 434 r,407 408 432 433 g,403 407 414 419 r,412 414 416 418 r,407 412 414 420 g,407 413 418 422 r,412 418 424 434 r,417 424 427 429 r,425 426 430 435 r,421 422 429 429 g,422 423 429 429 r,423 428 432 436 r,428 431 441 441 r,427 432 440 440 g,424 424 432 433 g,421 424 447 447 r,443 444 447 460 r,437 438 445 446 g,428 428 438 445 g,428 428 435 443 r,427 428 435 437 g,415 422 429 430 g,420 421 432 432 r,430 432 434 435 r,433 434 437 443 r,432 435 443 445 r,433 439 445 447 g,438 440 446 446 r,443 445 448 448 r,439 441 448 448 g,436 440 442 443 g,427 429 440 444 g,427 428 432 440 r,432 432 444 446 r,435 436 444 445 g,434 436 452 456 r,438 438 451 456 g,431 438 448 450 r,445 449 452 454 r,451 451 458 465 r,455 457 465 465 r,464 466 477 478 r,471 472 477 482 g,454 455 474 475 g,450 454 467 470 r,463 467 471 478 r,471 471 512 526 r,480 484 514 521 g,477 482 495 496 r,481 488 517 517 r,501 515 521 521 r,495 498 520 520 g,499 499 533 538 r,525 531 541 541 r,520 522 540 540 g,502 514 523 523 g,478 504 515 515 g,480 499 505 511 g,482 490 499 517 g,471 488 490 490 g,478 487 504 507 r,501 501 519 521 r,515 518 542 542 r,532 539 541 546 g,516 520 540 543 g,522 522 550 552 r,545 549 571 573 r,553 563 571 572 g,547 550 562 564 g,542 551 563 569 r,553 562 575 578 r,558 563 575 585 g,551 554 564 565 g,546 554 564 564 r,548 551 563 563 g,551 551 571 571 r,567 569 625 627 r,625 625 643 649 r,633 636 642 657 g,626 636 644 644 r,614 642 651 656 r,634 637 650 651 g,626 637 639 639 r,637 637 674 687 r,656 659 674 674 g,645 647 661 661 g,633 637 648 651 g,636 637 653 654 r,652 653 660 666 r,640 641 660 660 g,633 634 643 653 g,626 630 631 637 w,628 630 642 642 r,637 642 650 658 r,635 638 648 652 g,634 638 643 649 r,631 639 642 644 g,632 637 643 644 r,642 643 648 652 r,646 647 668 668 r,667 667 688 688 r,688 688 702 702 r,701 701 703 714 r,691 694 705 705 g,684 688 696 709 g,689 691 696 699 g,689 690 698 714 r,689 692 698 705 g,661 662 693 693 g,662 663 685 690 r,681 685 714 714 r,700 700 709 719 g,691 692 701 701 g,691 692 708 714 r,689 701 708 710 g,700 700 707 717 r,705 706 730 736 r,715 729 732 737 r,722 732 743 743 r,742 742 755 777 r,755 757 779 782 r,768 777 794 796 r,689 701 774 777 g,653 681 702 702 g` }
];
const colors = { r: '#f7524f', g: '#26a69a', w: '#ffffff' };
const STEP = 4.1675;

let plot = '<path d="M0 682.5H4000" stroke="#666"/><path d="M637.5 0V2000" stroke="#fff" stroke-dasharray="4 4"/><path d="M1417 0h10l-5 5z" fill="#888"/>';
series.forEach(({ start, bars }) => bars.split(',').forEach((bar, i) => {
  const [high, top, bottom, low, kind] = bar.split(' ');
  const x = Math.round((start + i) * STEP - 1);
  plot += `<path fill="${colors[kind]}" d="M${x} ${+high + 1}h1V${+low + 1}h-1zM${x - 1} ${+top + 1}h3V${Math.max(+bottom, +top + 1) + 1}h-3z"/>`;
}));
document.getElementById('candles').innerHTML = plot;

// price scale
let prices = '';
for (let k = 0; k <= 22; k++) {
  const y = Math.round(19 + k * 36.09);
  prices += `<path d="M0 ${y + 0.5}h3" stroke="#fff"/><text x="6" y="${y + 4}">${(110.195 - k * 0.05).toFixed(3)}</text>`;
}
prices += '<path d="M1 677h43v12H1z" fill="#fff"/><text class="now" x="6" y="687">109.275</text>';
document.getElementById('prices').innerHTML = prices;

// time scale
const times = ['14 Sep 2021', '14 Sep 12:35', '14 Sep 13:55', '14 Sep 15:15', '14 Sep 16:35', '14 Sep 17:55', '14 Sep 19:15', '14 Sep 20:35', '14 Sep 21:55', '14 Sep 23:15', '15 Sep 00:35', '15 Sep 01:55', '15 Sep 03:15', '15 Sep 04:35', '15 Sep 05:55', '15 Sep 07:15', '15 Sep 08:35', '15 Sep 09:55', '15 Sep 11:15', '15 Sep 12:35', '15 Sep 13:55', '15 Sep 15:15'];
document.getElementById('times').innerHTML = times.map((t, k) => {
  const x = Math.round(k * STEP * 16);
  return `<path d="M${x + 0.5} 0v3" stroke="#fff"/><text x="${x - 1}" y="14">${t}</text>`;
}).join('');
```
